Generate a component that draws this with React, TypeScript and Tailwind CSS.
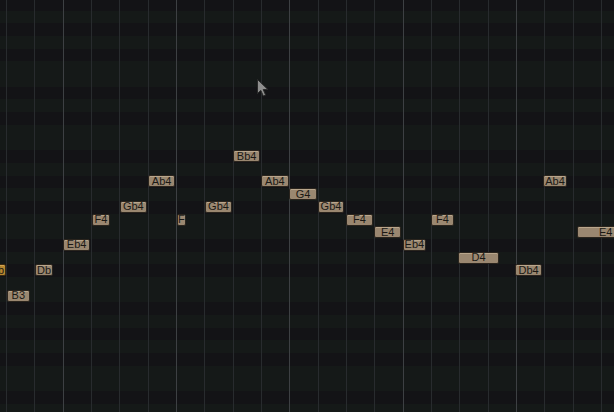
import React from 'react';

type Note = {
  x: number;
  w: number;
  pitch: number; // semitones below Bb4
  label: string;
  tone?: 'orange';
  align?: 'end';
};

const ROW = 12.7;
const BB4_TOP = 150.3;
const STEP = 28.333;

// rows from top of the view, starting at Bb5 (partial)
const NAMES = ['Bb', 'A', 'Ab', 'G', 'Gb', 'F', 'E', 'Eb', 'D', 'Db', 'C', 'B'];
const BLACK = new Set(['Bb', 'Ab', 'Gb', 'Eb', 'Db']);
const rows = Array.from({ length: 34 }, (_, i) => NAMES[i % 12]);

const notes: Note[] = [
  { x: -20, w: 26, pitch: 9, label: 'Db', tone: 'orange', align: 'end' },
  { x: 6.7, w: 23.3, pitch: 11, label: 'B3' },
  { x: 35, w: 18.3, pitch: 9, label: 'Db' },
  { x: 63.3, w: 26.7, pitch: 7, label: 'Eb4' },
  { x: 91.7, w: 18.5, pitch: 5, label: 'F4' },
  { x: 120, w: 26.7, pitch: 4, label: 'Gb4' },
  { x: 148.3, w: 26.7, pitch: 2, label: 'Ab4' },
  { x: 176.7, w: 9.5, pitch: 5, label: 'F' },
  { x: 204.7, w: 27.6, pitch: 4, label: 'Gb4' },
  { x: 233, w: 27.3, pitch: 0, label: 'Bb4' },
  { x: 261, w: 27.7, pitch: 2, label: 'Ab4' },
  { x: 289.3, w: 27.4, pitch: 3, label: 'G4' },
  { x: 317.7, w: 26.6, pitch: 4, label: 'Gb4' },
  { x: 346, w: 27, pitch: 5, label: 'F4' },
  { x: 374.3, w: 26.7, pitch: 6, label: 'E4' },
  { x: 402.7, w: 23.3, pitch: 7, label: 'Eb4' },
  { x: 430.7, w: 23.6, pitch: 5, label: 'F4' },
  { x: 458.3, w: 40.4, pitch: 8, label: 'D4' },
  { x: 515, w: 27.3, pitch: 9, label: 'Db4' },
  { x: 543.3, w: 23.4, pitch: 2, label: 'Ab4' },
  { x: 577.3, w: 56.7, pitch: 6, label: 'E4' },
];

const gridLines = Array.from({ length: 22 }, (_, k) => k);

function Cursor() {
  return (
    <svg className="absolute left-[256px] top-[78px]" width="14" height="20" viewBox="0 0 14 20">
      <path
        d="M1.5 1.5 L1.5 15.5 L4.8 12.4 L7.3 18 L9.6 17 L7.2 11.6 L11.8 11.4 Z"
        fill="#8e8e8e"
        stroke="#2a2a2a"
        strokeWidth="1"
        strokeLinejoin="round"
      />
    </svg>
  );
}

function NoteBox({ note }: { note: Note }) {
  const top = BB4_TOP + note.pitch * ROW - 0.3;
  const fill =
    note.tone === 'orange'
      ? 'bg-[#b8862f] border-[#3a2a12] shadow-[inset_0_1px_0_#d4a450]'
      : 'bg-[#9a8770] border-[#2a241d] shadow-[inset_0_1px_0_#b9a68c]';
  return (
    <div
      className={`absolute flex h-[12px] items-center overflow-hidden rounded-[2px] border ${fill} ${
        note.align === 'end' ? 'justify-end pr-[1px]' : 'justify-center'
      }`}
      style={{ left: note.x, top, width: note.w }}
    >
      <span className="whitespace-nowrap text-[11px] leading-none text-[#1b1915]">{note.label}</span>
    </div>
  );
}

export default function App() {
  return (
    <div className="relative h-[412px] w-[614px] overflow-hidden bg-[#131316] font-['Liberation_Sans',Arial,sans-serif]">
      <div className="flex flex-col">
        {rows.map((name, i) => (
          <div
            key={i}
            className={`${i === 0 ? 'h-[10.6px]' : 'h-[12.7px]'} ${BLACK.has(name) ? 'bg-[#131316]' : 'bg-[#151918]'}`}
          />
        ))}
      </div>

      <div className="absolute inset-0 flex">
        <div className="w-[6px] shrink-0" />
        {gridLines.map((k) => (
          <div
            key={k}
            className={`w-[28.333px] shrink-0 border-l ${k % 4 === 2 ? 'border-[#3d4043]' : 'border-[#282b2e]'}`}
          />
        ))}
      </div>

      <div className="absolute inset-0">
        {notes.map((n, i) => (
          <NoteBox key={i} note={n} />
        ))}
      </div>

      <Cursor />
    </div>
  );
}
